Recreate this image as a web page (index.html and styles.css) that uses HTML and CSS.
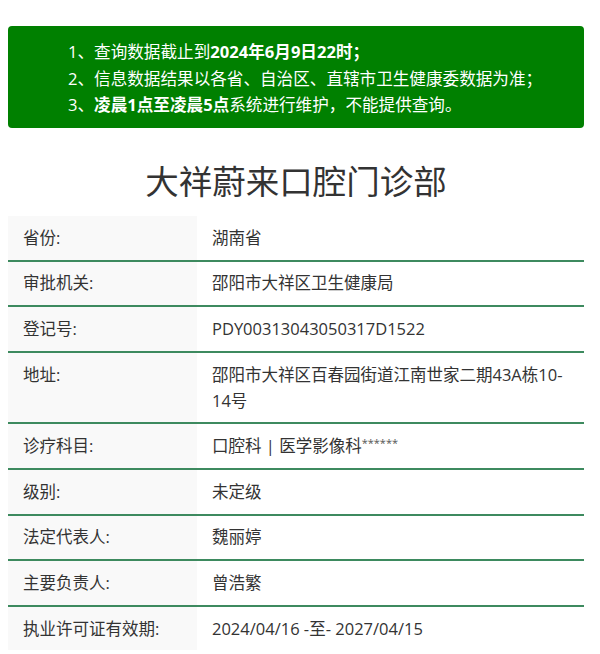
FILE: index.html
```html
<!DOCTYPE html>
<html lang="zh-CN">
<head>
<meta charset="utf-8">
<title>大祥蔚来口腔门诊部</title>
<link rel="stylesheet" href="styles.css">
</head>
<body>
<div class="page">
  <div class="notice">
    <ul class="notice-list">
      <li>1、查询数据截止到<b>2024年6月9日22时；</b></li>
      <li>2、信息数据结果以各省、自治区、直辖市卫生健康委数据为准；</li>
      <li>3、<b>凌晨1点至凌晨5点</b>系统进行维护，不能提供查询。</li>
    </ul>
  </div>
  <h1 class="title">大祥蔚来口腔门诊部</h1>
  <table class="info">
    <tbody>
      <tr><td class="label">省份:</td><td class="value">湖南省</td></tr>
      <tr><td class="label">审批机关:</td><td class="value">邵阳市大祥区卫生健康局</td></tr>
      <tr><td class="label">登记号:</td><td class="value">PDY00313043050317D1522</td></tr>
      <tr><td class="label">地址:</td><td class="value">邵阳市大祥区百春园街道江南世家二期43A栋10-14号</td></tr>
      <tr><td class="label">诊疗科目:</td><td class="value">口腔科 | 医学影像科<span class="stars">******</span></td></tr>
      <tr><td class="label">级别:</td><td class="value">未定级</td></tr>
      <tr><td class="label">法定代表人:</td><td class="value">魏丽婷</td></tr>
      <tr><td class="label">主要负责人:</td><td class="value">曾浩繁</td></tr>
      <tr><td class="label">执业许可证有效期:</td><td class="value">2024/04/16 -至- 2027/04/15</td></tr>
    </tbody>
  </table>
</div>
</body>
</html>
```
FILE: styles.css
```css
* { box-sizing: border-box; }
html, body { margin: 0; padding: 0; background: #fff; }
body {
  font-family: "Open Sans", "Noto Sans CJK SC", sans-serif;
  color: #333;
}
.page {
  width: 576px;
  margin-left: 8px;
  padding-top: 26px;
}
.notice {
  background: #008000;
  border-radius: 4px;
  height: 102px;
  padding: 13px 0 0 60px;
  color: #fff;
}
.notice-list {
  list-style: none;
  margin: 0;
  padding: 0;
  font-size: 16.6px;
  line-height: 26.7px;
}
.notice-list b { font-weight: 700; }
.title {
  margin: 28px 0 10px;
  text-align: center;
  font-size: 33.5px;
  font-weight: 400;
  line-height: 50px;
  color: #333;
}
.info {
  width: 576px;
  border-collapse: collapse;
  font-size: 16.5px;
  line-height: 26px;
}
.info td {
  padding: 8.8px 15px;
  border-bottom: 2px solid #3d8a5f;
  vertical-align: top;
}
.info tr:last-child td { border-bottom: none; }
.label {
  width: 189px;
  background: #f9f9f9;
  padding-left: 15px;
}
.value {
  padding-left: 14px;
}
.stars { font-size: 11px; vertical-align: top; line-height: 20px; color: #555; }
```
